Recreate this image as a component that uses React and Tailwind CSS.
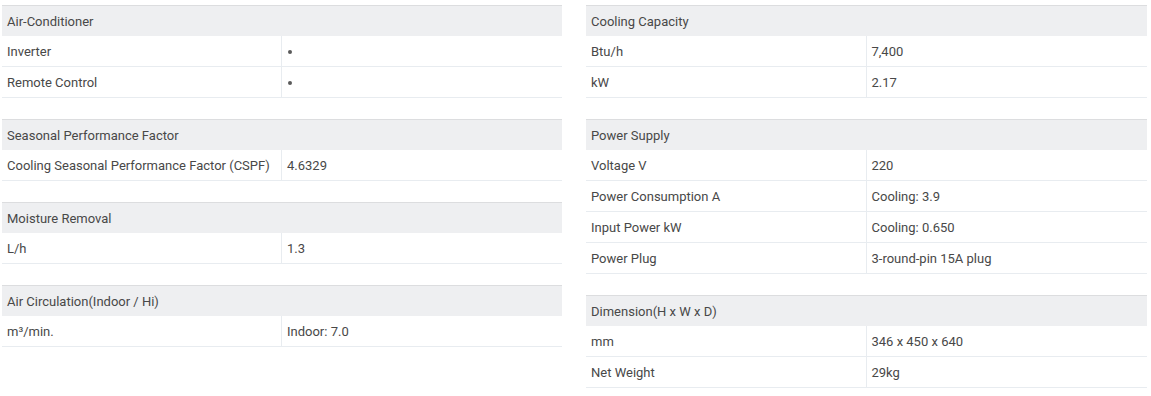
const leftTables = [
  {
    title: "Air-Conditioner",
    rows: [
      ["Inverter", "dot"],
      ["Remote Control", "dot"],
    ],
  },
  {
    title: "Seasonal Performance Factor",
    rows: [["Cooling Seasonal Performance Factor (CSPF)", "4.6329"]],
  },
  {
    title: "Moisture Removal",
    rows: [["L/h", "1.3"]],
  },
  {
    title: "Air Circulation(Indoor / Hi)",
    rows: [["m³/min.", "Indoor: 7.0"]],
  },
]

const rightTables = [
  {
    title: "Cooling Capacity",
    rows: [
      ["Btu/h", "7,400"],
      ["kW", "2.17"],
    ],
  },
  {
    title: "Power Supply",
    rows: [
      ["Voltage V", "220"],
      ["Power Consumption A", "Cooling: 3.9"],
      ["Input Power kW", "Cooling: 0.650"],
      ["Power Plug", "3-round-pin 15A plug"],
    ],
  },
  {
    title: "Dimension(H x W x D)",
    rows: [
      ["mm", "346 x 450 x 640"],
      ["Net Weight", "29kg"],
    ],
  },
]

const SpecTable = ({ title, rows }) => (
  <div className="mb-[21px]">
    <div className="h-[31px] flex items-center pt-[1px] px-[5px] bg-[#eeeff1] border-t border-[#dcdddf]">
      {title}
    </div>
    {rows.map(([label, value], i) => (
      <div key={i} className="h-[31px] grid grid-cols-2 border-b border-[#e8ecf0]">
        <div className="flex items-center pt-[1px] px-[5px] border-r border-[#e8ecf0]">{label}</div>
        <div className="flex items-center pt-[1px] px-[5px]">
          {value === "dot" ? (
            <span className="block w-[4px] h-[4px] rounded-full bg-[#5a5a5a] ml-[1px]" />
          ) : (
            value
          )}
        </div>
      </div>
    ))}
  </div>
)

export default function App() {
  return (
    <div
      className="w-[1151px] h-[396px] bg-white pt-[5px] px-[2px] grid grid-cols-[560px_561px] gap-x-[24px] items-start text-[13px] text-[#484848]"
      style={{ fontFamily: 'Roboto, "Liberation Sans", Arial, sans-serif' }}
    >
      <div>
        {leftTables.map((t) => (
          <SpecTable key={t.title} {...t} />
        ))}
      </div>
      <div>
        {rightTables.map((t) => (
          <SpecTable key={t.title} {...t} />
        ))}
      </div>
    </div>
  )
}
